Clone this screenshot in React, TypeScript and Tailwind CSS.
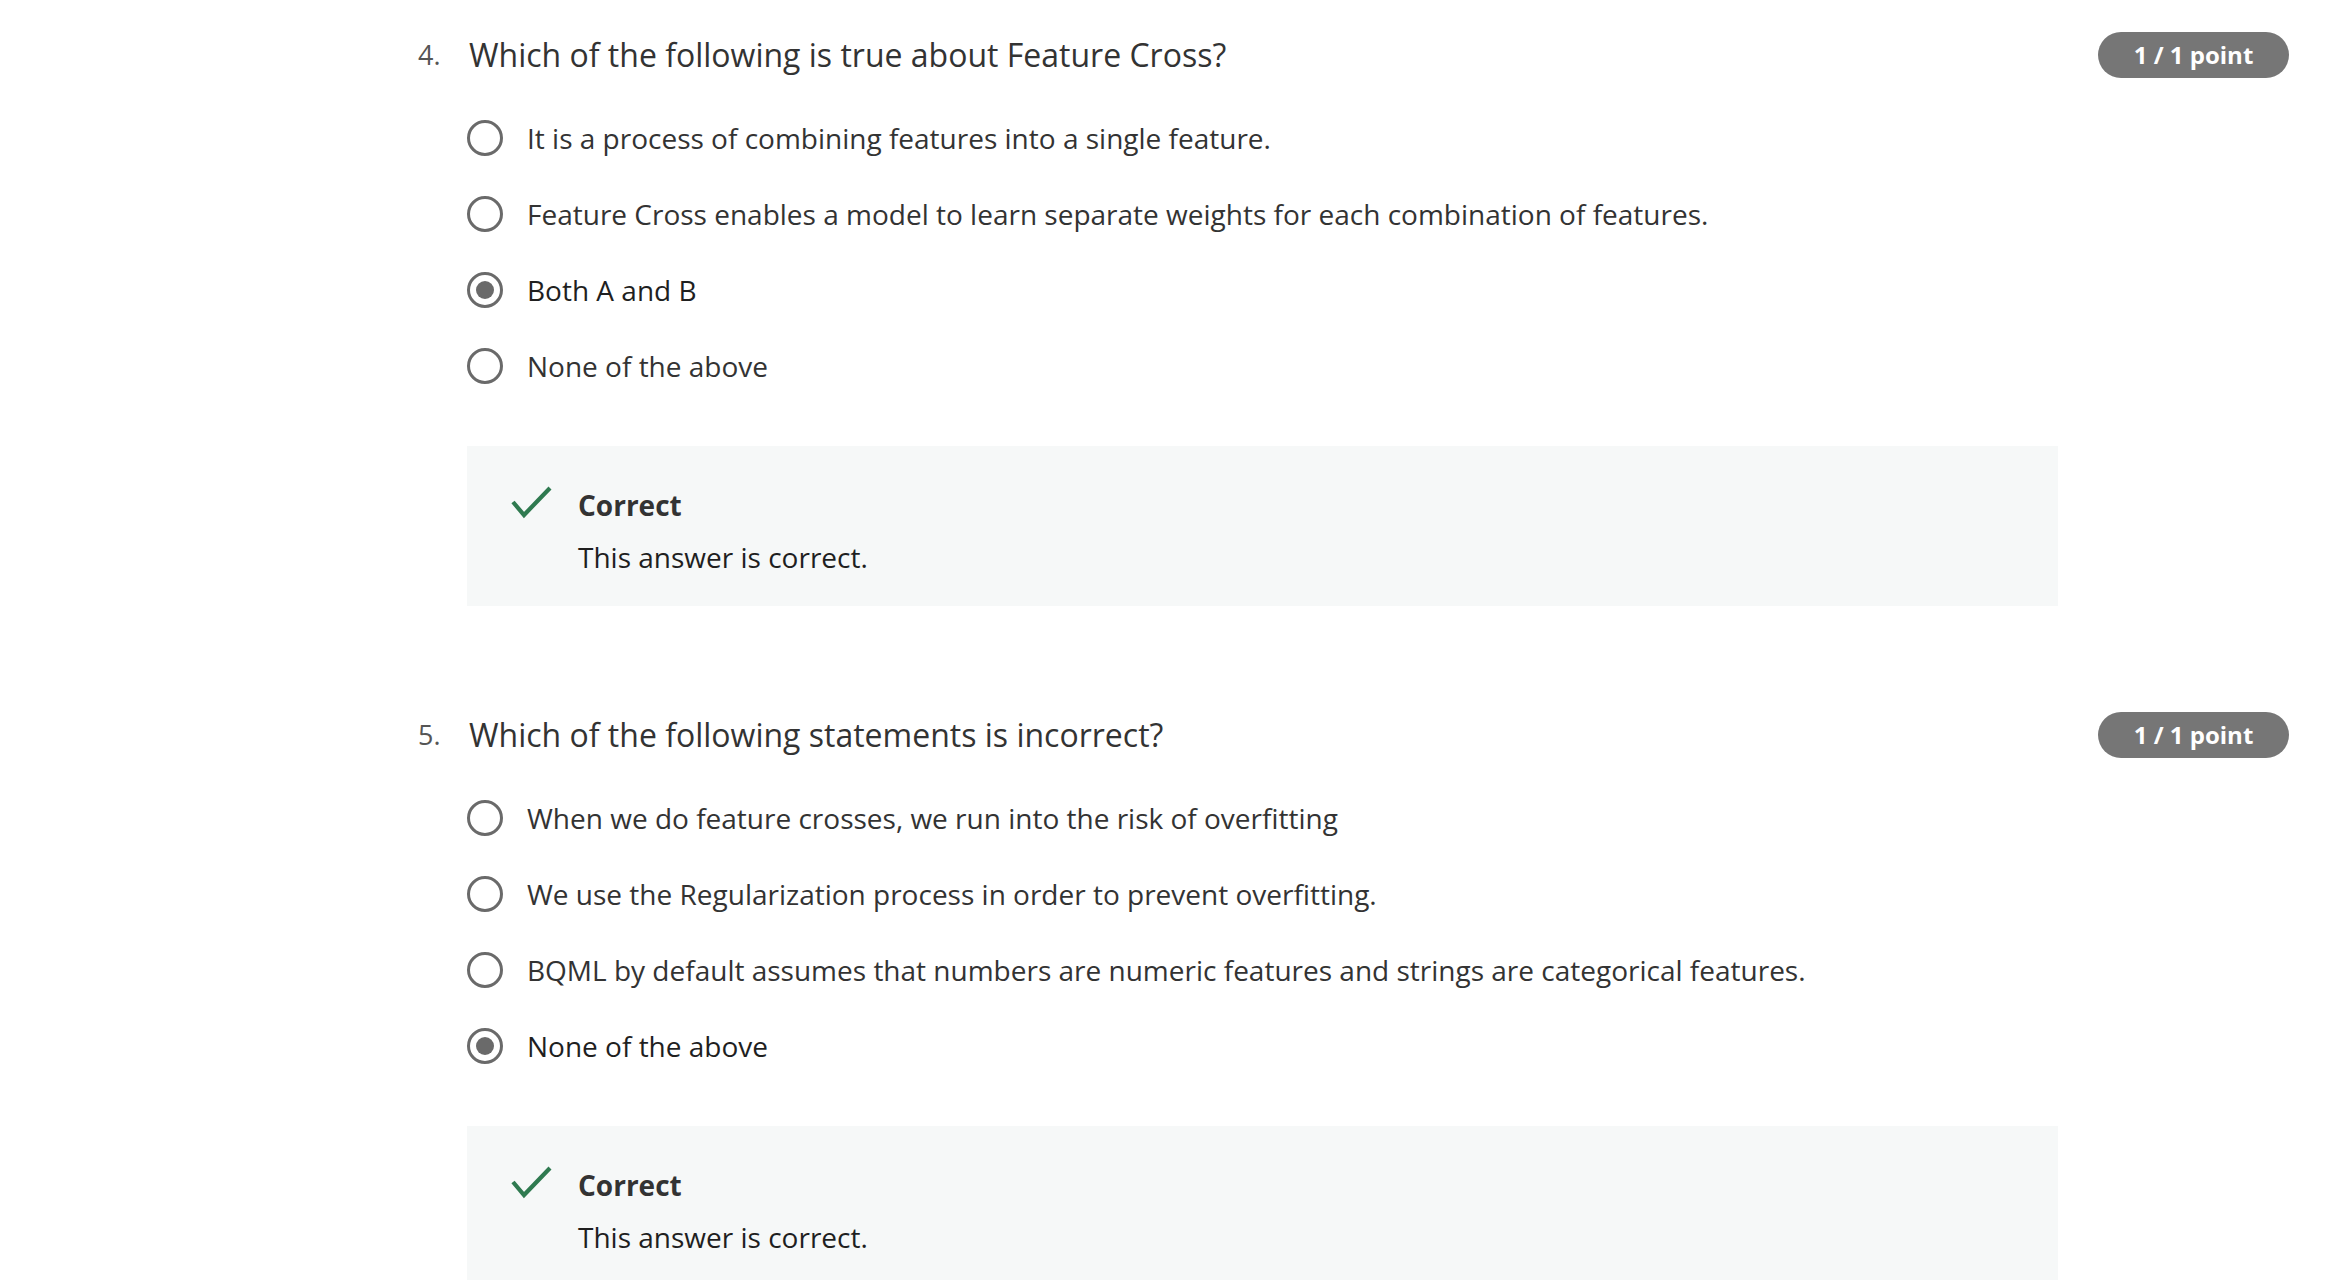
import React from "react";

type Q = {
  num: string;
  text: string;
  options: string[];
  selected: number;
};

const questions: Q[] = [
  {
    num: "4.",
    text: "Which of the following is true about Feature Cross?",
    options: [
      "It is a process of combining features into a single feature.",
      "Feature Cross enables a model to learn separate weights for each combination of features.",
      "Both A and B",
      "None of the above",
    ],
    selected: 2,
  },
  {
    num: "5.",
    text: "Which of the following statements is incorrect?",
    options: [
      "When we do feature crosses, we run into the risk of overfitting",
      "We use the Regularization process in order to prevent overfitting.",
      "BQML by default assumes that numbers are numeric features and strings are categorical features.",
      "None of the above",
    ],
    selected: 3,
  },
];

function Radio({ checked }: { checked: boolean }) {
  return (
    <div className="w-[36px] h-[36px] rounded-full border-[3.5px] border-[#6a6a6a] flex items-center justify-center shrink-0">
      {checked && <div className="w-[18px] h-[18px] rounded-full bg-[#6a6a6a]" />}
    </div>
  );
}

function Check() {
  return (
    <svg width="42" height="34" viewBox="0 0 42 34" fill="none">
      <path d="M3 17 L14 30 L40 3" stroke="#2f7a50" strokeWidth="4.2" strokeLinecap="butt" strokeLinejoin="miter" />
    </svg>
  );
}

function Question({ q, first }: { q: Q; first: boolean }) {
  return (
    <div className={first ? "pt-[32px]" : "pt-[106px]"}>
      <div className="flex items-center h-[46px]">
        <div className="w-[51px] shrink-0 text-[27px] text-[#555] leading-none -mt-[2px]">{q.num}</div>
        <div className="flex-1 text-[32px] text-[#333] leading-none">{q.text}</div>
        <div className="ml-[40px] w-[191px] h-[46px] rounded-full bg-[#767676] flex items-center justify-center text-white font-bold text-[24px] shrink-0">
          1 / 1 point
        </div>
      </div>
      <div className="pl-[49px] pr-[231px]">
        <div className="pt-[22px]">
          {q.options.map((o, i) => (
            <div key={i} className="flex items-center h-[76px]">
              <Radio checked={i === q.selected} />
              <div className={`ml-[24px] text-[28px] leading-none -mt-[1px] ${i === q.selected ? "text-[#1f1f1f]" : "text-[#333]"}`}>{o}</div>
            </div>
          ))}
        </div>
        <div className="mt-[42px] h-[160px] bg-[#f6f8f8] flex items-start pl-[43px] pt-[41px]">
          <div className="w-[68px] shrink-0 -mt-[2px]">
            <Check />
          </div>
          <div className="flex flex-col">
            <div className="text-[28px] font-bold text-[#333] leading-[36px]">Correct</div>
            <div className="text-[28px] text-[#1f1f1f] leading-[36px] mt-[16px]">This answer is correct.</div>
          </div>
        </div>
      </div>
    </div>
  );
}

export default function App() {
  return (
    <div
      className="w-[2348px] h-[1280px] overflow-hidden bg-white pl-[418px] pr-[59px]"
      style={{ fontFamily: '"Open Sans", "Noto Sans", sans-serif' }}
    >
      {questions.map((q, i) => (
        <Question key={i} q={q} first={i === 0} />
      ))}
    </div>
  );
}
